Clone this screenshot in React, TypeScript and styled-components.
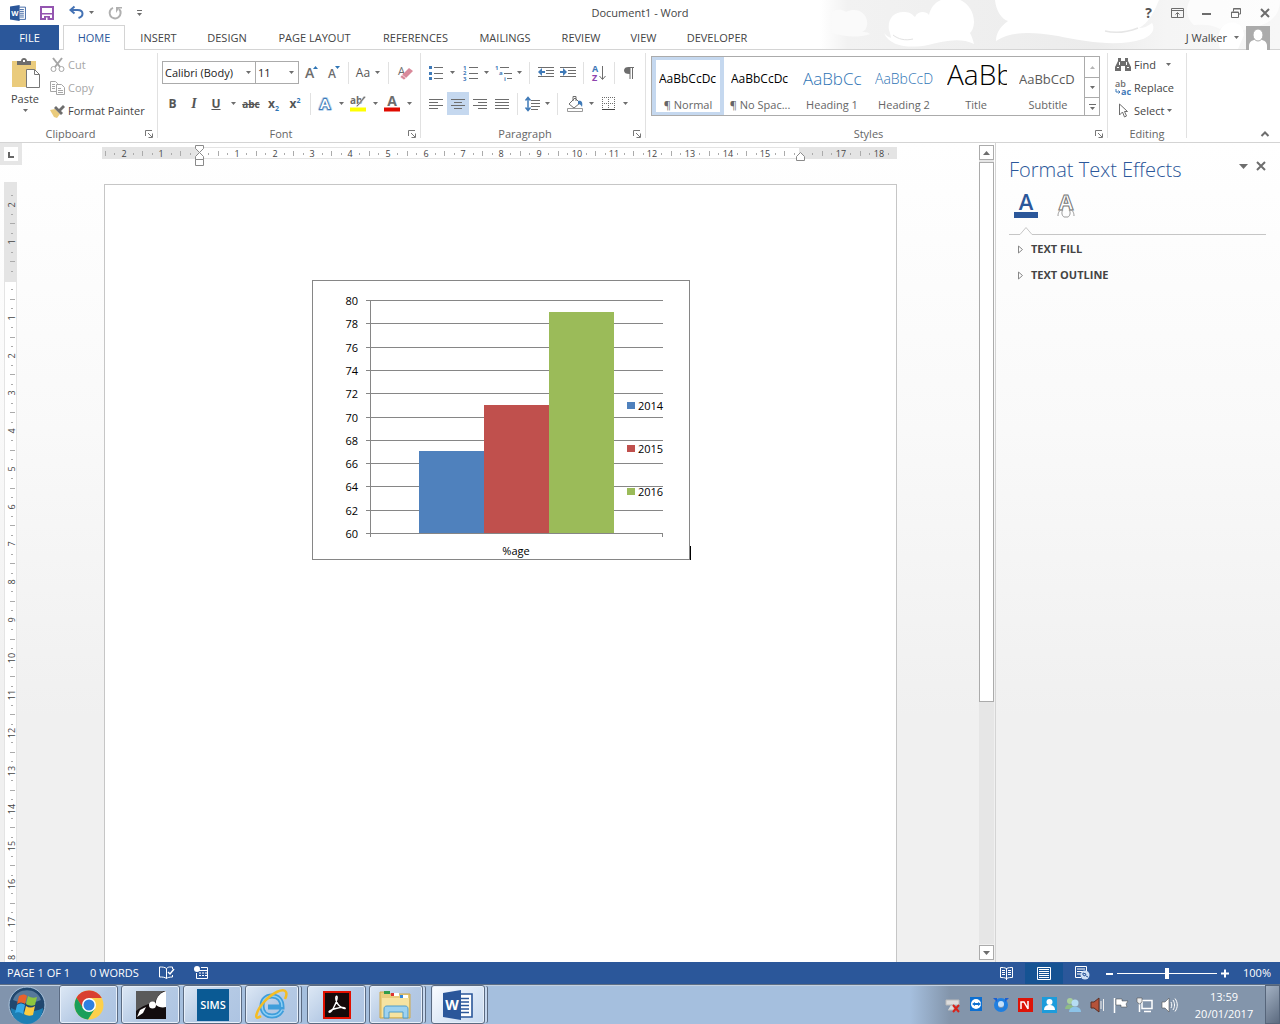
import React from "react";
import styled, { createGlobalStyle, css } from "styled-components";

const BLUE = "#2b579a";
const GREY = "#6d6d6d";
const UI = `"Open Sans", "Noto Sans", sans-serif`;

const Global = createGlobalStyle`
  *, *::before, *::after { box-sizing: border-box; }
  body { margin: 0; overflow: hidden; font: 11px/16px ${UI}; color: #444; background: #fff; }
  button, select, input { font: inherit; color: inherit; margin: 0; }
  svg { display: block; flex: none; overflow: visible; }
`;

const Window = styled.div`
  height: 100vh;
  display: flex;
  flex-direction: column;
`;

/* ---------- header ---------- */
const Header = styled.header`
  position: relative;
  flex: none;
  height: 50px;
  display: flex;
  flex-direction: column;
`;
const Clouds = styled.svg`
  position: absolute;
  right: 0;
  top: 0;
  overflow: hidden;
`;
const TitleBar = styled.div`
  position: relative;
  height: 25px;
  display: grid;
  grid-template-columns: 1fr auto 1fr;
  align-items: center;
`;
const QuickAccess = styled.div`
  display: flex;
  align-items: center;
  padding-left: 8px;
`;
const WindowButtons = styled.div`
  display: flex;
  justify-content: flex-end;
`;
const DocTitle = styled.h1`
  margin: 0;
  font-size: 11px;
  font-weight: 400;
  line-height: 24px;
`;
const Plain = styled.button<{ $w?: number; $h?: number; $on?: boolean }>`
  flex: none;
  display: flex;
  align-items: center;
  justify-content: center;
  width: ${(p) => (p.$w ? `${p.$w}px` : "auto")};
  height: ${(p) => p.$h ?? 23}px;
  padding: 0;
  border: 0;
  background: ${(p) => (p.$on ? "#c5d8ef" : "transparent")};
`;
const TabRow = styled.nav`
  position: relative;
  height: 25px;
  display: flex;
  box-shadow: inset 0 -1px #d4d4d4;
`;
const Tab = styled.button<{ $w: number; $kind?: "file" | "active" }>`
  flex: none;
  width: ${(p) => p.$w}px;
  padding: 0;
  border: 0;
  background: transparent;
  white-space: nowrap;
  line-height: 24px;
  ${(p) =>
    p.$kind === "file" &&
    css`
      background: ${BLUE};
      color: #fff;
      margin-right: 4px;
    `}
  ${(p) =>
    p.$kind === "active" &&
    css`
      background: #fff;
      color: ${BLUE};
      border: 1px solid #d4d4d4;
      border-bottom: 0;
    `}
`;
const Account = styled.div`
  margin-left: auto;
  display: flex;
  align-items: center;
  gap: 7px;
  padding-right: 10px;
`;

/* ---------- ribbon ---------- */
const Ribbon = styled.div`
  flex: none;
  height: 93px;
  display: flex;
  padding-top: 3px;
  background: #fff;
  border-bottom: 1px solid #d4d4d4;
`;
const Group = styled.section<{ $w: number }>`
  flex: none;
  width: ${(p) => p.$w}px;
  height: 85px;
  display: grid;
  grid-template-rows: 73px 12px;
  border-right: 1px solid #e1e1e1;
`;
const GroupLabel = styled.div`
  display: flex;
  line-height: 16px;
  color: #666;
  span { flex: 1; text-align: center; }
`;
const Rows = styled.div`
  display: flex;
  flex-direction: column;
  gap: 8px;
  padding: 8px 0 0 4px;
`;
const Row = styled.div`
  display: flex;
  align-items: center;
  height: 23px;
`;
const Rule = styled.i<{ $w: number }>`
  flex: none;
  width: ${(p) => p.$w}px;
  height: 22px;
  background: linear-gradient(#e1e1e1, #e1e1e1) center / 1px 100% no-repeat;
`;
const Gap = styled.i<{ $w: number }>`
  flex: none;
  width: ${(p) => p.$w}px;
`;
const ClipBody = styled.div`
  display: flex;
`;
const PasteButton = styled.button`
  width: 50px;
  padding: 4px 0 0;
  border: 0;
  background: none;
  display: flex;
  flex-direction: column;
  align-items: center;
  gap: 2px;
`;
const Stack = styled.div<{ $pad?: number }>`
  display: flex;
  flex-direction: column;
  padding-left: ${(p) => p.$pad ?? 0}px;
`;
const Command = styled.button<{ $off?: boolean }>`
  height: 23px;
  padding: 0;
  border: 0;
  background: none;
  display: flex;
  align-items: center;
  gap: 3px;
  color: ${(p) => (p.$off ? "#a6a6a6" : "#444")};
  white-space: nowrap;
`;
const Combo = styled.label<{ $w: number }>`
  flex: none;
  width: ${(p) => p.$w}px;
  height: 23px;
  display: grid;
  align-items: center;
  border: 1px solid #ababab;
  & + & { border-left: 0; }
  select, svg { grid-area: 1 / 1; }
  svg { justify-self: end; margin-right: 4px; pointer-events: none; }
  select {
    appearance: none;
    width: 100%;
    height: 21px;
    padding: 0 0 0 2px;
    border: 0;
    background: none;
    color: #222;
  }
`;
const Letter = styled.span<{ $size?: number }>`
  font-size: ${(p) => p.$size ?? 12}px;
  font-weight: 700;
  color: #555;
  sup, sub { font-size: 7px; line-height: 0; color: #2e75b6; }
`;
const SerifLetter = styled(Letter)`
  font-family: "Liberation Serif", serif;
  font-size: 14px;
`;
const Gallery = styled.div`
  margin: 3px 7px 10px 5px;
  display: flex;
  border: 1px solid #ababab;
`;
const StyleCard = styled.button<{ $on?: boolean }>`
  width: 72px;
  padding: 0 3px;
  border: ${(p) => (p.$on ? "4px solid #c5d8ef" : "4px solid transparent")};
  border-width: 3px 4px;
  background: none;
  display: flex;
  flex-direction: column;
  color: #666;
  white-space: nowrap;
  span { line-height: 15px; align-self: center; }
`;
const Preview = styled.b<{ $size: number; $color: string; $light?: boolean }>`
  width: 60px;
  height: 37px;
  display: block;
  overflow: hidden;
  text-align: left;
  font-size: ${(p) => p.$size}px;
  font-weight: ${(p) => (p.$light ? 300 : 400)};
  line-height: ${(p) => (p.$size > 20 ? 28 : 38)}px;
  color: ${(p) => p.$color};
`;
const Scroller = styled.div`
  width: 15px;
  margin-left: auto;
  display: grid;
  grid-template-rows: repeat(3, 1fr);
  border-left: 1px solid #ababab;
  button + button { border-top: 1px solid #ababab; }
`;
const RibbonEnd = styled.div`
  flex: 1;
  display: flex;
  align-items: flex-end;
  justify-content: flex-end;
  padding: 0 6px 0 0;
`;

/* ---------- workspace ---------- */
const Workspace = styled.main`
  flex: 1;
  min-height: 0;
  display: flex;
  background: linear-gradient(#fff 0, #f9f9f9 35%, #f0f0f0 70%, #f0f0f0);
`;
const LeftEdge = styled.div`
  flex: none;
  width: 22px;
  display: flex;
  flex-direction: column;
  overflow: hidden;
`;
const TabSelector = styled.button`
  flex: none;
  width: 22px;
  height: 22px;
  margin-bottom: 17px;
  border: 4px solid #e6e6e6;
  background: #fff;
  padding: 2px 0 0 4px;
`;
const VerticalRuler = styled.svg`
  margin-left: 4px;
`;
const Canvas = styled.div`
  flex: 1;
  min-width: 0;
  display: flex;
  flex-direction: column;
  align-items: center;
  overflow: hidden;
`;
const HorizontalRuler = styled.svg`
  margin-top: 2px;
`;
const Page = styled.article`
  flex: 1;
  width: 793px;
  margin-top: 15px;
  padding-top: 95px;
  border: 1px solid #c6c6c6;
  border-bottom: 0;
  background: #fff;
`;
const Paragraph = styled.div`
  display: flex;
  justify-content: center;
  align-items: flex-end;
  padding-left: 2px;
`;
const TextCursor = styled.i`
  width: 1px;
  height: 14px;
  background: #000;
`;
const ScrollBar = styled.div`
  flex: none;
  width: 17px;
  display: flex;
  flex-direction: column;
  padding: 2px 1px 2px 0;
  border-right: 1px solid #d4d4d4;
`;
const ScrollArrow = styled.button`
  flex: none;
  height: 15px;
  padding: 0;
  border: 1px solid #ababab;
  background: #fff;
  display: grid;
  place-items: center;
`;
const Track = styled.div`
  flex: 1;
  padding-top: 2px;
  background: #e6e6e6;
  margin-bottom: 1px;
`;
const Thumb = styled.div`
  height: 69%;
  background: #fff;
  border: 1px solid #ababab;
`;
const Pane = styled.aside`
  flex: none;
  width: 284px;
  padding: 13px 14px 0 13px;
`;
const PaneHead = styled.div`
  display: flex;
  height: 28px;
  margin-right: -4px;
  h2 { flex: 1; margin: 0; font-size: 20px; line-height: 28px; font-weight: 300; color: ${BLUE}; white-space: nowrap; }
`;
const PaneTabs = styled.div`
  display: flex;
  gap: 16px;
  padding: 8px 0 5px 5px;
`;
const Sections = styled.div`
  display: flex;
  flex-direction: column;
  padding-top: 1px;
`;
const Section = styled.button`
  height: 26px;
  padding: 0 0 0 9px;
  display: flex;
  align-items: center;
  gap: 7px;
  border: 0;
  background: none;
  font-weight: 700;
`;

/* ---------- status bar ---------- */
const StatusBar = styled.footer`
  flex: none;
  height: 22px;
  display: flex;
  align-items: center;
  padding: 0 9px 0 7px;
  background: ${BLUE};
  color: #fff;
`;
const StatusItems = styled.div`
  flex: 1;
  display: flex;
  align-items: center;
  gap: 20px;
`;
const ZoomRange = styled.input`
  appearance: none;
  width: 100px;
  height: 12px;
  margin: 0 4px;
  background: linear-gradient(#fff, #fff) center / 100% 1px no-repeat;
  &::-webkit-slider-thumb { appearance: none; width: 4px; height: 11px; background: #fff; }
`;
const ZoomValue = styled.output`
  width: 42px;
  text-align: right;
`;

/* ---------- task bar ---------- */
const TaskBar = styled.div`
  flex: none;
  height: 40px;
  display: flex;
  border-top: 1px solid #5e6f85;
  box-shadow: inset 0 1px #c3d1e2;
  background: linear-gradient(90deg, #8194ad 0, #8194ad 58px, #a5bfde 64px, #a5bfde calc(100% - 370px), #8395ab calc(100% - 330px), #8395ab);
`;
const Start = styled.button`
  width: 59px;
  padding: 0 0 0 8px;
  border: 0;
  background: none;
`;
const Apps = styled.div`
  flex: 1;
  display: flex;
  gap: 3px;
`;
const TaskButton = styled.button<{ $stack?: boolean; $on?: boolean; $after?: number }>`
  flex: none;
  width: ${(p) => (p.$stack ? 54 : 59)}px;
  height: 39px;
  margin-right: ${(p) => p.$after ?? 0}px;
  padding: 0;
  display: grid;
  place-items: center;
  border: 1px solid #5b6b82;
  border-radius: 3px;
  background: ${(p) =>
    p.$on
      ? "linear-gradient(135deg, #fafcff, #d8e5f5 60%, #c8daf0)"
      : "linear-gradient(135deg, #dde8f5, #b4c9e4 55%, #adc4e2)"};
  box-shadow: inset 0 0 0 1px #e6effa${(p) => (p.$stack ? ", 3px 0 0 -1px #c5d7ee, 4px 0 0 -1px #5b6b82" : "")};
`;
const Tray = styled.div`
  display: flex;
  align-items: center;
  gap: 6px;
`;
const Clock = styled.time`
  width: 80px;
  margin-right: -3px;
  text-align: center;
  line-height: 17px;
  color: #fff;
`;
const ShowDesktop = styled.button`
  width: 15px;
  margin-left: 4px;
  border: 1px solid #56657a;
  background: linear-gradient(135deg, #a3b1c3, #5c6b80);
`;

/* ---------- small drawings ---------- */
type IcoProps = { w: number; h: number; children: React.ReactNode };
const Ico = ({ w, h, children }: IcoProps) => (
  <svg width={w} height={h} viewBox={`0 0 ${w} ${h}`} fill="none" aria-hidden="true">
    {children}
  </svg>
);
const Down = ({ color = GREY }: { color?: string }) => (
  <Ico w={5} h={3}><path d="M0 0h5L2.5 3z" fill={color} /></Ico>
);
const Up = ({ color = GREY }: { color?: string }) => (
  <Ico w={5} h={3}><path d="M0 3h5L2.5 0z" fill={color} /></Ico>
);
const Launcher = () => (
  <Plain $w={16} $h={16} aria-label="More options">
    <Ico w={8} h={8}>
      <path d="M.5 6V.5H7M3 3l4 4M7.5 3.5v4h-4" stroke="#777" />
    </Ico>
  </Plain>
);
const DropButton = ({ w = 12, label }: { w?: number; label: string }) => (
  <Plain $w={w} aria-label={label}><Down /></Plain>
);
const Lines = ({ rows }: { rows: [number, number][] }) => (
  <Ico w={14} h={12}>
    {rows.map(([x, w], i) => (
      <path key={i} d={`M${x} ${1.5 + i * 3}h${w}`} stroke={GREY} />
    ))}
  </Ico>
);
const WordMark = ({ s }: { s: number }) => (
  <svg width={s} height={s} viewBox="0 0 30 30" aria-hidden="true">
    <path d="M15 4h14v23H15z" fill="#fff" stroke={BLUE} strokeWidth="1.6" />
    <path d="M18 8.500h8M18 12h8M18 15.500h8M18 19h8M18 22.500h8" stroke={BLUE} strokeWidth="1.600" />
    <path d="M0 3l18-3v30L0 27z" fill={BLUE} />
    <text x="9" y="20" textAnchor="middle" fontSize="14" fontWeight="700" fill="#fff">W</text>
  </svg>
);

/* ---------- rulers ---------- */
const CM = 37.75;
const HRuler = () => {
  const zero = 97;
  const marks: React.ReactNode[] = [];
  for (let q = -10; q <= 73; q++) {
    const x = Math.round(zero + (q * CM) / 4);
    if (q % 4 === 0) {
      const n = Math.abs(q / 4);
      if (n !== 0 && n !== 16)
        marks.push(<text key={q} x={x} y={12} textAnchor="middle" fontSize="9" fill="#444">{n}</text>);
    } else {
      const tall = q % 2 === 0;
      marks.push(<path key={q} d={`M${x + 0.5} ${tall ? 6 : 8}v${tall ? 5 : 2}`} stroke="#ababab" />);
    }
  }
  return (
    <HorizontalRuler width="797" height="24" aria-label="Horizontal ruler">
      <path d="M0 2h795v12H0z" fill="#e4e4e4" />
      <path d="M97 3h600v10H97z" fill="#fff" />
      {marks}
      <path d="M93.500 .5h8v3l-4 4-4-4zM93.500 14.500v-3l4-4 4 4v3zM93.500 14.500h8v6h-8z" fill="#fff" stroke="#8a8a8a" />
      <path d="M694.500 15.500v-4l4-4 4 4v4z" fill="#fff" stroke="#8a8a8a" />
    </HorizontalRuler>
  );
};
const VRuler = () => {
  const zero = 98;
  const marks: React.ReactNode[] = [];
  for (let q = -9; q <= 110; q++) {
    const y = Math.round(zero + (q * CM) / 4);
    if (q % 4 === 0) {
      if (q !== 0)
        marks.push(
          <text key={q} transform={`translate(11 ${y}) rotate(-90)`} textAnchor="middle" fontSize="9" fill="#444">
            {Math.abs(q / 4)}
          </text>
        );
    } else {
      const tall = q % 2 === 0;
      marks.push(<path key={q} d={`M${tall ? 6 : 7} ${y + 0.5}h${tall ? 5 : 2}`} stroke="#ababab" />);
    }
  }
  return (
    <VerticalRuler width="13" height="1200" aria-label="Vertical ruler">
      <path d="M0 0h13v1200H0z" fill="#e4e4e4" />
      <path d="M1 100h11v1100H1z" fill="#fff" />
      {marks}
    </VerticalRuler>
  );
};

/* ---------- chart ---------- */
const series = [
  { year: "2014", value: 67, color: "#4f81bd" },
  { year: "2015", value: 71, color: "#c0504d" },
  { year: "2016", value: 79, color: "#9bbb59" },
];
const yOf = (v: number) => Math.round(20 + ((80 - v) * 233) / 20);
const Chart = () => (
  <svg width="378" height="280" role="img" aria-label="Percentage by year" fontSize="11" fill="#000" fontFamily={UI}>
    <rect x=".5" y=".5" width="377" height="279" fill="#fff" stroke="#868686" />
    {Array.from({ length: 11 }, (_, i) => 80 - i * 2).map((v) => (
      <g key={v}>
        <path d={`M54 ${yOf(v) + 0.5}H351`} stroke="#868686" />
        <text x="46" y={yOf(v) + 5} textAnchor="end">{v}</text>
      </g>
    ))}
    {series.map((s, i) => (
      <rect key={s.year} x={107 + i * 65} y={yOf(s.value)} width="65" height={253 - yOf(s.value)} fill={s.color} />
    ))}
    <path d="M58.500 20v237M350.500 253v4" stroke="#868686" />
    {series.map((s, i) => (
      <g key={s.year}>
        <rect x="315" y={122 + i * 43} width="8" height="7" fill={s.color} />
        <text x="326" y={130 + i * 43}>{s.year}</text>
      </g>
    ))}
    <text x="204" y="275" textAnchor="middle">%age</text>
  </svg>
);

const tabs: [string, number][] = [
  ["INSERT", 67], ["DESIGN", 70], ["PAGE LAYOUT", 105], ["REFERENCES", 97],
  ["MAILINGS", 82], ["REVIEW", 70], ["VIEW", 55], ["DEVELOPER", 92],
];
const styles = [
  { name: "¶ Normal", text: "AaBbCcDc", size: 12, color: "#000", on: true },
  { name: "¶ No Spac...", text: "AaBbCcDc", size: 12, color: "#000" },
  { name: "Heading 1", text: "AaBbCc", size: 17, color: "#2e74b5", light: true },
  { name: "Heading 2", text: "AaBbCcD", size: 14, color: "#2e74b5", light: true },
  { name: "Title", text: "AaBb", size: 28, color: "#000", light: true },
  { name: "Subtitle", text: "AaBbCcD", size: 13, color: "#5a5a5a" },
];

const TopBar = () => (
  <Header>
    <Clouds width="460" height="49" viewBox="-20 0 460 49" aria-hidden="true">
      <defs>
        <linearGradient id="sky" x1="0" x2="1" y1="0" y2="0">
          <stop offset="0" stopColor="#fff" />
          <stop offset=".06" stopColor="#f2f2f2" />
          <stop offset=".6" stopColor="#ececec" />
          <stop offset=".75" stopColor="#f5f5f5" />
          <stop offset="1" stopColor="#f7f7f7" />
        </linearGradient>
      </defs>
      <path d="M-20 0h460v49H-20z" fill="url(#sky)" />
      <path d="M-8 12c6-4 12-2 14 0 10-5 20 0 21 9 1 6-2 10-5 11 3 0 6 0 8 2-12 4-25 3-38-1z" fill="#fafafa" />
      <path d="M49 30c-2-12 6-19 16-18 5 0 8 3 10 5 2-5 10-7 14-2C91 5 99-2 111-2c14 0 23 12 23 24 0 5-2 9-4 11 2 4 3 7 4 11-14-7-30-3-46 1-15 3-38 3-44-12 2 2 4 4 7 5 0-2-1-5-2-8z" fill="#fff" />
      <path d="M53 35c5 4 12 6 20 4" stroke="#e2e2e2" fill="none" />
      <path d="M155 0c1 10 6 19 13 21-8 6-12 12-12 20 14-9 32-10 62-5 30 6 60 11 85 3 8-3 13-9 9-16-4 3-8 5-13 5 10-5 16-18 20-28z" fill="#fff" />
      <path d="M265 31c8 2 20 2 33-3" stroke="#e6e6e6" fill="none" strokeWidth="1.500" />
      <path d="M350 0c-6 10-2 20 4 25 10-1 20 0 26 4 8-8 16-2 20 2 20-5 40-8 40-31z" fill="#fff" opacity=".7" />
      <path d="M380 49c-4-14 0-24 9-26s14 4 15 12l-6 14z" fill="#fff" />
    </Clouds>
    <TitleBar>
      <QuickAccess>
        <Plain $w={20} aria-label="Word"><WordMark s={16} /></Plain>
        <Gap $w={8} />
        <Plain $w={22} aria-label="Save">
          <Ico w={14} h={14}>
            <path d="M1 1h12v12H1z" stroke="#9455b0" strokeWidth="2" />
            <path d="M2 7h10v1.500H2zM4 10h6v4H4z" fill="#9455b0" />
            <path d="M6 11.500h1.500V14H6z" fill="#fff" />
          </Ico>
        </Plain>
        <Gap $w={8} />
        <Plain $w={20} aria-label="Undo">
          <Ico w={15} h={13}>
            <path d="M5.500.500L1.500 4l4 3.500M1.500 4h7c3.500 0 5 1.500 5 3.700 0 2-1.500 3.500-4 4.300" stroke="#4472b4" strokeWidth="2" />
          </Ico>
        </Plain>
        <DropButton w={10} label="Undo history" />
        <Gap $w={9} />
        <Plain $w={20} aria-label="Repeat">
          <Ico w={14} h={14}>
            <path d="M5 1.800A5.500 5.500 0 1 0 11 3" stroke="#b0b0b0" strokeWidth="2" />
            <path d="M8 7V1h6v1.500h-3z" fill="#b0b0b0" />
          </Ico>
        </Plain>
        <Gap $w={8} />
        <Plain $w={12} aria-label="Customize quick access">
          <Ico w={5} h={6}><path d="M0 .5h5" stroke={GREY} /><path d="M0 3h5L2.500 6z" fill={GREY} /></Ico>
        </Plain>
      </QuickAccess>
      <DocTitle>Document1 - Word</DocTitle>
      <WindowButtons>
        <Plain $w={29} aria-label="Help"><Letter $size={14}>?</Letter></Plain>
        <Plain $w={29} aria-label="Ribbon options">
          <Ico w={13} h={10}><path d="M.5.500h12v9H.5zM.5 2.500h12M6.500 9V5M4.500 6.500l2-2 2 2" stroke={GREY} /></Ico>
        </Plain>
        <Plain $w={29} aria-label="Minimize"><Ico w={9} h={9}><path d="M0 6h9" stroke={GREY} strokeWidth="2" /></Ico></Plain>
        <Plain $w={29} aria-label="Restore">
          <Ico w={10} h={10}><path d="M.5 4h7v5.500h-7zM.5 4.500h7M2.500 3.500V.500h7V6H8M2.500 1h7" stroke={GREY} /></Ico>
        </Plain>
        <Plain $w={30} aria-label="Close"><Ico w={10} h={10}><path d="M1 1l8 8M9 1L1 9" stroke={GREY} strokeWidth="2" /></Ico></Plain>
      </WindowButtons>
    </TitleBar>
    <TabRow>
      <Tab $w={59} $kind="file">FILE</Tab>
      <Tab $w={62} $kind="active">HOME</Tab>
      {tabs.map(([name, w]) => <Tab key={name} $w={w}>{name}</Tab>)}
      <Account>
        <span>J Walker</span>
        <Down />
        <Ico w={24} h={24}>
          <path d="M0 0h24v24H0z" fill="#ababab" />
          <path d="M3 24v-4c0-4 3-6 6-6h6c3 0 6 2 6 6v4z" fill="#fff" />
          <ellipse cx="12" cy="9" rx="5" ry="6" fill="#fff" stroke="#ababab" />
        </Ico>
      </Account>
    </TabRow>
  </Header>
);

const ClipboardGroup = () => (
  <Group $w={158}>
    <ClipBody>
      <PasteButton>
        <Ico w={28} h={32}>
          <path d="M1 4h24v26H1z" fill="#eacb7c" />
          <path d="M6 8V4h4c0-4 6-4 6 0h4v4z" fill="#6d6d6d" />
          <path d="M12 3h2v2h-2z" fill="#fff" />
          <path d="M15.500 12.500h8l5 5v13h-13z" fill="#fff" stroke="#777" />
          <path d="M23.500 12.500v5h5" stroke="#777" />
        </Ico>
        <span>Paste</span>
        <Down />
      </PasteButton>
      <Stack>
        <Command $off>
          <Ico w={15} h={16}>
            <path d="M3 1l7 9M12 1L5 10" stroke="#a6a6a6" strokeWidth="2" />
            <circle cx="3.500" cy="12" r="2.500" stroke="#a6a6a6" />
            <circle cx="11.500" cy="12" r="2.500" stroke="#a6a6a6" />
          </Ico>
          Cut
        </Command>
        <Command $off>
          <Ico w={15} h={14}>
            <path d="M.5.500h5l2 2v8h-7zM2 3.500h3M2 5.500h3M2 7.500h3" stroke="#a6a6a6" />
            <path d="M6.500 3.500h5l3 3v7h-8z" fill="#fff" stroke="#a6a6a6" />
            <path d="M8 7.500h3M8 9.500h5M8 11.500h5" stroke="#a6a6a6" />
          </Ico>
          Copy
        </Command>
        <Command>
          <Ico w={15} h={14}>
            <path d="M0 6l5-1 5 5-3 4-3-1z" fill="#eacb7c" />
            <path d="M4 4l2-2 3 3 4-4 2 2-4 4 2 2-2 2z" fill="#6d6d6d" />
          </Ico>
          Format Painter
        </Command>
      </Stack>
    </ClipBody>
    <GroupLabel><span>Clipboard</span><Launcher /></GroupLabel>
  </Group>
);

const FontGroup = () => (
  <Group $w={263}>
    <Rows>
      <Row>
        <Combo $w={94}><select aria-label="Font name"><option>Calibri (Body)</option></select><Down /></Combo>
        <Combo $w={43}><select aria-label="Font size"><option>11</option></select><Down /></Combo>
        <Plain $w={24} aria-label="Grow font">
          <Ico w={13} h={16}><text x="0" y="13" fontSize="14" fontWeight="600" fill={GREY}>A</text><path d="M8 4l2.500-3L13 4z" fill="#2e75b6" /></Ico>
        </Plain>
        <Plain $w={20} aria-label="Shrink font">
          <Ico w={11} h={16}><text x="0" y="13" fontSize="12" fontWeight="600" fill={GREY}>A</text><path d="M7 1h5L9.500 4z" fill="#2e75b6" /></Ico>
        </Plain>
        <Rule $w={10} />
        <Plain $w={20} aria-label="Change case">
          <Letter as="span"><CaseText>Aa</CaseText></Letter>
        </Plain>
        <DropButton label="Case options" w={9} />
        <Rule $w={12} />
        <Plain $w={22} aria-label="Clear formatting">
          <Ico w={15} h={16}>
            <text x="0" y="10" fontSize="11" fill={GREY}>A</text>
            <path d="M3 11l8-8 4 3-8 8z" fill="#d9899a" />
            <path d="M2 12l2-2 4 3-2 2z" fill="#d9899a" stroke="#fff" strokeWidth=".6" />
          </Ico>
        </Plain>
      </Row>
      <Row>
        <Plain $w={21} aria-label="Bold"><Letter>B</Letter></Plain>
        <Plain $w={22} aria-label="Italic"><SerifLetter as="em">I</SerifLetter></Plain>
        <Plain $w={22} aria-label="Underline"><Letter as="u">U</Letter></Plain>
        <DropButton label="Underline styles" />
        <Plain $w={24} aria-label="Strikethrough"><Letter as="s" $size={10}>abc</Letter></Plain>
        <Plain $w={21} aria-label="Subscript"><Letter>x<sub>2</sub></Letter></Plain>
        <Plain $w={22} aria-label="Superscript"><Letter>x<sup>2</sup></Letter></Plain>
        <Rule $w={8} />
        <Plain $w={22} aria-label="Text effects">
          <Ico w={16} h={16}>
            <text x="8" y="13" textAnchor="middle" fontSize="15" fontWeight="600" fill="#3f7ab8" stroke="#bcd6ee" strokeWidth="4" strokeLinejoin="round">A</text>
            <text x="8" y="13" textAnchor="middle" fontSize="15" fontWeight="600" fill="#fff" stroke="#3f7ab8" strokeWidth="2" paintOrder="stroke">A</text>
          </Ico>
        </Plain>
        <DropButton label="Text effect styles" w={10} />
        <Plain $w={24} aria-label="Highlight">
          <Ico w={17} h={17}>
            <text x="0" y="9" fontSize="10" fontWeight="700" fill={GREY}>ab</text>
            <path d="M16 2l-7 8-2 2-1-1 2-2 6-8z" fill="#777" stroke="#fff" strokeWidth=".5" />
            <path d="M0 12.500h16v4H0z" fill="#ff0" />
          </Ico>
        </Plain>
        <DropButton label="Highlight colours" w={10} />
        <Plain $w={24} aria-label="Font colour">
          <Ico w={16} h={17}>
            <text x="8" y="11" textAnchor="middle" fontSize="14" fontWeight="700" fill={GREY}>A</text>
            <path d="M0 12.500h16v4H0z" fill="#e00b00" />
          </Ico>
        </Plain>
        <DropButton label="Font colours" w={10} />
      </Row>
    </Rows>
    <GroupLabel><span>Font</span><Launcher /></GroupLabel>
  </Group>
);
const CaseText = styled.span`
  font-weight: 400;
`;

const ParagraphGroup = () => (
  <Group $w={225}>
    <Rows>
      <Row>
        <Plain $w={22} aria-label="Bullets">
          <Ico w={14} h={14}>
            <path d="M5 1.500h9M5 7.500h9M5 12.500h9" stroke={GREY} />
            <path d="M0 0h3v3H0zM0 6h3v3H0zM0 11h3v3H0z" fill="#3f7ab8" />
          </Ico>
        </Plain>
        <DropButton label="Bullet styles" w={11} />
        <Plain $w={24} aria-label="Numbering">
          <Ico w={15} h={16}>
            <path d="M6 2.500h9M6 8.500h9M6 13.500h9" stroke={GREY} />
            <g fontSize="6" fontWeight="700" fill="#3f7ab8"><text x="0" y="5">1</text><text x="0" y="10">2</text><text x="0" y="16">3</text></g>
          </Ico>
        </Plain>
        <DropButton label="Numbering styles" w={9} />
        <Plain $w={24} aria-label="Multilevel list">
          <Ico w={17} h={16}>
            <path d="M5 2.500h9M9 8.500h8M12 13.500h5" stroke={GREY} />
            <g fontSize="6" fontWeight="700" fill="#3f7ab8"><text x="0" y="5">1</text><text x="4" y="10">a</text><text x="9" y="16">i</text></g>
          </Ico>
        </Plain>
        <DropButton label="List styles" w={8} />
        <Rule $w={12} />
        <Plain $w={22} aria-label="Decrease indent">
          <Ico w={16} h={11}>
            <path d="M0 .500h16M8 3.500h8M8 6.500h8M0 9.500h16" stroke={GREY} />
            <path d="M0 5l4-4v3h3v2H4v3z" fill="#3f7ab8" />
          </Ico>
        </Plain>
        <Plain $w={22} aria-label="Increase indent">
          <Ico w={16} h={11}>
            <path d="M0 .500h16M8 3.500h8M8 6.500h8M0 9.500h16" stroke={GREY} />
            <path d="M7 5L3 1v3H0v2h3v3z" fill="#3f7ab8" />
          </Ico>
        </Plain>
        <Rule $w={8} />
        <Plain $w={24} aria-label="Sort">
          <Ico w={14} h={16}>
            <text x="0" y="7" fontSize="9" fontWeight="700" fill="#3f7ab8">A</text>
            <text x="0" y="16" fontSize="9" fontWeight="700" fill="#8e44ad">Z</text>
            <path d="M10.500 1v13M7.500 11l3 3.500 3-3.500" stroke={GREY} />
          </Ico>
        </Plain>
        <Rule $w={6} />
        <Plain $w={24} aria-label="Show paragraph marks">
          <Ico w={10} h={12}><path d="M4.500 0H10v1H9v11H8V1H6.500v11h-1V7C2 7 0 6 0 3.500S2 0 4.500 0z" fill={GREY} /></Ico>
        </Plain>
      </Row>
      <Row>
        <Plain $w={22} aria-label="Align left"><Lines rows={[[0, 14], [0, 9], [0, 14], [0, 9]]} /></Plain>
        <Plain $w={22} $on aria-label="Centre"><Lines rows={[[0, 14], [3, 8], [0, 14], [3, 8]]} /></Plain>
        <Plain $w={22} aria-label="Align right"><Lines rows={[[0, 14], [5, 9], [0, 14], [5, 9]]} /></Plain>
        <Plain $w={22} aria-label="Justify"><Lines rows={[[0, 14], [0, 14], [0, 14], [0, 14]]} /></Plain>
        <Rule $w={8} />
        <Plain $w={22} aria-label="Line spacing">
          <Ico w={15} h={16}>
            <path d="M6 4.500h9M6 7.500h9M6 10.500h9M6 13.500h7" stroke={GREY} />
            <path d="M3 2v12M.5 4.500L3 1.500l2.500 3M.5 11.500l2.500 3 2.500-3" stroke="#3f7ab8" strokeWidth="1.500" />
          </Ico>
        </Plain>
        <DropButton label="Spacing options" w={8} />
        <Rule $w={13} />
        <Plain $w={22} aria-label="Shading">
          <Ico w={17} h={16}>
            <path d="M2 8l6-6 5 5-6 5zM6 5V.5h3V5" stroke={GREY} />
            <path d="M11 5c4-1 5 2 4 6-1-2-2-3-4-3z" fill="#3f7ab8" />
            <path d="M.5 12.500h15v3H.5z" fill="#fff" stroke="#999" />
          </Ico>
        </Plain>
        <DropButton label="Shading colours" w={11} />
        <Plain $w={23} aria-label="Borders">
          <Ico w={13} h={14}><path d="M.5 0v12M6.500 0v12M12.500 0v12M0 .500h13M0 6.500h13" stroke={GREY} strokeDasharray="1 1" /><path d="M0 12.500h13" stroke="#444" /></Ico>
        </Plain>
        <DropButton label="Border styles" w={10} />
      </Row>
    </Rows>
    <GroupLabel><span>Paragraph</span><Launcher /></GroupLabel>
  </Group>
);

const StylesGroup = () => (
  <Group $w={462}>
    <Gallery>
      {styles.map((s) => (
        <StyleCard key={s.name} $on={s.on}>
          <Preview $size={s.size} $color={s.color} $light={s.light}>{s.text}</Preview>
          <span>{s.name}</span>
        </StyleCard>
      ))}
      <Scroller>
        <Plain $h={20} aria-label="Scroll up"><Up color="#b5b5b5" /></Plain>
        <Plain $h={20} aria-label="Scroll down"><Down /></Plain>
        <Plain $h={20} aria-label="More styles"><Ico w={7} h={7}><path d="M0 .500h7" stroke={GREY} /><path d="M1 3h5L3.500 6z" fill={GREY} /></Ico></Plain>
      </Scroller>
    </Gallery>
    <GroupLabel><span>Styles</span><Launcher /></GroupLabel>
  </Group>
);

const EditingGroup = () => (
  <Group $w={79}>
    <Stack $pad={7}>
      <Command>
        <Ico w={16} h={14}>
          <path d="M3 0h3v3h4V0h3v3l3 6v4h-6V8H6v5H0V9l3-6z" fill={GREY} />
          <path d="M2 9.500h2M12 9.500h2M4.500 4v3M11.500 4v3" stroke="#fff" />
        </Ico>
        Find<Gap $w={4} /><Down />
      </Command>
      <Command>
        <Ico w={16} h={16}>
          <text x="0" y="7" fontSize="9" fontWeight="600" fill={GREY}>ab</text>
          <text x="6" y="15" fontSize="9" fontWeight="700" fill="#3f7ab8">ac</text>
          <path d="M1 9v3h4M3.500 10.500L5 12l-1.500 1.500" stroke="#3f7ab8" />
        </Ico>
        Replace
      </Command>
      <Command>
        <Ico w={16} h={15}><path d="M4.500 1v11l3-3 2 5 2-1-2-4.500h3z" fill="#fff" stroke={GREY} /></Ico>
        Select<Down />
      </Command>
    </Stack>
    <GroupLabel><span>Editing</span></GroupLabel>
  </Group>
);

const TaskPane = () => (
  <Pane>
    <PaneHead>
      <h2>Format Text Effects</h2>
      <Plain $w={18} $h={20} aria-label="Pane options"><Ico w={9} h={5}><path d="M0 0h9L4.500 5z" fill={GREY} /></Ico></Plain>
      <Plain $w={18} $h={20} aria-label="Close pane"><Ico w={10} h={10}><path d="M1 1l8 8M9 1L1 9" stroke={GREY} strokeWidth="2" /></Ico></Plain>
    </PaneHead>
    <PaneTabs>
      <Plain $w={24} $h={28} aria-label="Text fill and outline">
        <Ico w={24} h={26}>
          <text x="12" y="17" textAnchor="middle" fontSize="22" fontWeight="600" fill={BLUE}>A</text>
          <path d="M0 19h24v6H0z" fill={BLUE} />
        </Ico>
      </Plain>
      <Plain $w={24} $h={28} aria-label="Text effects">
        <Ico w={20} h={26}>
          <text x="10" y="17" textAnchor="middle" fontSize="21" fontWeight="700" fill="#fff" stroke="#777">A</text>
          <path d="M2 23c0-4 2-6 3-6h2c-2 2-1 6 1 7h4c2-1 3-5 1-7h2c1 0 3 2 3 6" stroke="#999" />
        </Ico>
      </Plain>
    </PaneTabs>
    <PaneRule width="100%" height="10" aria-hidden="true">
      <path d="M0 9.500h11l6-7 6 7h2000" fill="none" stroke="#c6c6c6" />
    </PaneRule>
    <Sections>
      {["TEXT FILL", "TEXT OUTLINE"].map((t) => (
        <Section key={t}>
          <Ico w={6} h={9}><path d="M.5 1l4 3.500-4 3.500z" stroke="#888" /></Ico>
          {t}
        </Section>
      ))}
    </Sections>
  </Pane>
);
const PaneRule = styled.svg`
  overflow: hidden;
`;

const PrintLayout = styled(Plain)`
  background: #155393;
`;

const Status = () => (
  <StatusBar>
    <StatusItems>
      <span>PAGE 1 OF 1</span>
      <span>0 WORDS</span>
      <Ico w={15} h={14}>
        <path d="M7.500 2.500c-2-1.500-4-1.500-7-1.500v10c3 0 5 0 7 1.500 1-1 3-1.500 6-1.500V9M7.500 2.500v10M7.500 2.500c1-1 2-1.500 3-1.500h3v2" stroke="#fff" />
        <path d="M9 6l2 2 4-5" stroke="#fff" strokeWidth="1.500" />
      </Ico>
      <Ico w={14} h={14}>
        <circle cx="3" cy="3" r="3" fill="#fff" />
        <path d="M7 1.500h6.500v11h-11V7M5 4.500h8M5 7h2M8 7h2M11 7h2M5 9.500h2M8 9.500h2M11 9.500h2" stroke="#fff" />
      </Ico>
    </StatusItems>
    <Plain $w={38} $h={22} aria-label="Read mode">
      <Ico w={13} h={13}>
        <path d="M6.500 1.500c-2-1-4-1-6-1v10c2 0 4 0 6 1 2-1 4-1 6-1v-10c-2 0-4 0-6 1zM6.500 1v12M2 3.500h3M2 5.500h3M2 7.500h3M8 3.500h3M8 5.500h3M8 7.500h3" stroke="#fff" />
      </Ico>
    </Plain>
    <PrintLayout $w={38} $h={21} aria-label="Print layout">
      <Ico w={14} h={13}><path d="M.5.500h13v12H.5zM2 2.500h10M2 4.500h10M2 6.500h10M2 8.500h10M2 10.500h10" stroke="#fff" /></Ico>
    </PrintLayout>
    <Plain $w={38} $h={22} aria-label="Web layout">
      <Ico w={15} h={14}>
        <path d="M11.500 5V.500H.5v11H6M2 3h8M2 5.500h6M2 8h4" stroke="#fff" />
        <circle cx="10" cy="9" r="4.500" fill="#cfe0f5" />
        <path d="M8 7l3 1-1 2-2-1zM11 10l2 1" stroke={BLUE} />
      </Ico>
    </Plain>
    <Gap $w={4} />
    <Plain $w={8} $h={22} aria-label="Zoom out"><Ico w={7} h={9}><path d="M0 5h7" stroke="#fff" strokeWidth="2" /></Ico></Plain>
    <ZoomRange type="range" aria-label="Zoom" min={10} max={190} defaultValue={100} />
    <Plain $w={8} $h={22} aria-label="Zoom in"><Ico w={8} h={9}><path d="M0 4.500h8M4 .5v8" stroke="#fff" strokeWidth="2" /></Ico></Plain>
    <ZoomValue>100%</ZoomValue>
  </StatusBar>
);

const Tasks = () => (
  <TaskBar>
    <Start aria-label="Start">
      <Ico w={38} h={38}>
        <circle cx="19" cy="19" r="18" fill="#21476e" stroke="#aac3dc" />
        <path d="M3 22a16 16 0 0 0 32 0c-10 5-22 5-32 0z" fill="#1d7fb4" />
        <path d="M5 14c4-13 24-13 28 0-9 4-19 4-28 0z" fill="#6f8fae" opacity=".7" />
        <path d="M11 10c3-2 6-2 8 0l-2 8c-3-2-5-2-8 0z" fill="#e8622c" />
        <path d="M20 10c3 2 6 2 9 1l-2 8c-3 1-6 1-9-1z" fill="#8ec53f" />
        <path d="M9 19c3-2 5-2 8 0l-2 9c-3-2-6-2-8-1z" fill="#36a9e8" />
        <path d="M18 20c3 2 6 2 9 0l-2 9c-3 1-6 1-9-1z" fill="#fccb3f" />
      </Ico>
    </Start>
    <Apps>
      <TaskButton aria-label="Chrome">
        <Ico w={30} h={30}>
          <circle cx="15" cy="15" r="14.500" fill="#fdd04b" />
          <path d="M2.500 7.700A14.500 14.500 0 0 1 27.700 8H15l-6.500 10z" fill="#d93f30" />
          <path d="M2.500 7.700A14.500 14.500 0 0 0 14 29.500L21 18.500 9 18z" fill="#1a9f5a" />
          <circle cx="15" cy="15" r="7" fill="#fff" />
          <circle cx="15" cy="15" r="5.500" fill="#2f80e0" />
        </Ico>
      </TaskButton>
      <TaskButton aria-label="Media application">
        <Ico w={30} h={28}>
          <path d="M0 0h30v28H0z" fill="#120c0e" />
          <path d="M0 0h28c-6 3-8 8-9 12-6 0-13 3-19 8z" fill="#5a5a5a" />
          <path d="M30 0v16c-4 1-8 0-10-2-1-6 3-12 10-14z" fill="#fff" />
          <circle cx="16.500" cy="14" r="3.500" fill="#fff" />
          <path d="M1 26l3-7 6-3-3 6z" fill="#fff" />
        </Ico>
      </TaskButton>
      <TaskButton aria-label="SIMS">
        <Ico w={32} h={32}>
          <path d="M0 0h32v32H0z" fill="#0a5a94" />
          <text x="16" y="20" textAnchor="middle" fontSize="11" fontWeight="600" fill="#fff">SIMS</text>
        </Ico>
      </TaskButton>
      <TaskButton $stack $after={5} aria-label="Internet Explorer">
        <Ico w={32} h={32}>
          <path d="M26 21c-2 4-6 6-10 6-6 0-10-4-10-10S10 7 16 7s10 4 10 11H12" stroke="#3f9edb" strokeWidth="5" />
          <path d="M26 21c-2 4-6 6-10 6-6 0-10-4-10-10S10 7 16 7s10 4 10 11" stroke="#8fd0f5" strokeWidth="1.500" />
          <path d="M5 27C-3 33 0 22 8 13S28-2 30 3c1 2 0 5-1 7" stroke="#f4bd24" strokeWidth="2.500" />
        </Ico>
      </TaskButton>
      <TaskButton aria-label="Acrobat">
        <Ico w={28} h={28}>
          <path d="M1 1h26v26H1z" fill="#140a0a" stroke="#e01000" strokeWidth="2" />
          <path d="M6 21c-1-2 14-6 16-4s-7 0-9-8c-1-5 2-5 1-1-1 5-6 15-8 13z" stroke="#fff" strokeWidth="1.300" />
        </Ico>
      </TaskButton>
      <TaskButton $stack $after={5} aria-label="Explorer">
        <Ico w={34} h={32}>
          <path d="M1 3h8l2 2h20v24H1z" fill="#e8cd7e" stroke="#cfa94d" />
          <path d="M5 2h6v3H5z" fill="#2f9b4a" /><path d="M13 4h7v3h-7z" fill="#fff" /><path d="M12 4h3v3h-3z" fill="#d33" />
          <path d="M21 6h8v3h-8z" fill="#fff" /><path d="M21 6h3v3h-3z" fill="#38d" />
          <path d="M3 9h27v19H3z" fill="#f6e3a1" />
          <path d="M5 29V20c0-2 1-3 3-3h18c2 0 3 1 3 3v9h-5v-6H10v6z" fill="#9dd2f0" stroke="#4f9cca" />
        </Ico>
      </TaskButton>
      <TaskButton $stack $on aria-label="Word"><WordMark s={30} /></TaskButton>
    </Apps>
    <Tray>
      <Ico w={18} h={18}>
        <path d="M2 4h13v5H2zM7 9h3v5H4" fill="#ddd" stroke="#bbb" />
        <path d="M9 9l6 7M15 9l-6 7" stroke="#d9231a" strokeWidth="2" />
      </Ico>
      <Ico w={18} h={18}>
        <path d="M2 1h12v14H2z" fill="#0c6fd1" /><circle cx="8" cy="8" r="5" fill="#fff" />
        <path d="M4 8l3-2v1h3V6l3 2-3 2V9H7v1z" fill="#0c6fd1" />
      </Ico>
      <Ico w={18} h={18}>
        <circle cx="9" cy="9" r="5" stroke="#1f7fe0" strokeWidth="4" /><circle cx="9" cy="8" r="3" fill="#c4e1fb" />
        <path d="M1 2h4v4zM17 2h-4v4z" fill="#1c5fd0" />
      </Ico>
      <Ico w={18} h={18}>
        <path d="M2 2h15v14H2z" fill="#dd1408" />
        <path d="M5 13V6h3l4 7M12 5v8" stroke="#fff" strokeWidth="1.500" />
      </Ico>
      <Ico w={18} h={18}>
        <path d="M2 1h15v16H2z" fill="#1d9cdb" /><circle cx="9.500" cy="6" r="3" fill="#fff" />
        <path d="M4 14c0-4 3-5 5.500-5s5.500 1 5.500 5z" fill="#fff" />
      </Ico>
      <Ico w={18} h={18}>
        <circle cx="6" cy="5" r="3" fill="#a9cf9c" /><path d="M1 13c0-6 9-6 9 0z" fill="#8fbc86" />
        <circle cx="11" cy="7" r="3.500" fill="#b5dcf3" /><path d="M5 16c0-7 12-7 12 0z" fill="#8cc3e8" />
      </Ico>
      <Ico w={18} h={18}>
        <path d="M3 6h3l5-4v14l-5-4H3z" fill="#b5533a" stroke="#5d2e22" /><path d="M13 5v8M15.500 3v12" stroke="#eee" />
      </Ico>
      <Ico w={18} h={18}>
        <path d="M2.500 2v15" stroke="#fff" strokeWidth="1.500" /><path d="M4 3h6v2h6l-2 3 1 3H9V9H4z" fill="#fff" stroke="#444" strokeWidth=".5" />
      </Ico>
      <Ico w={18} h={18}>
        <path d="M6 4.500h10v8H6zM8 15.500h7M3.500 8v8" stroke="#fff" strokeWidth="1.500" /><path d="M1 2h5v4l-2.500 2L1 6z" fill="#eee" stroke="#555" strokeWidth=".6" />
      </Ico>
      <Ico w={18} h={18}>
        <path d="M2 6h3l4-4v14l-4-4H2z" fill="#fff" stroke="#555" strokeWidth=".6" />
        <path d="M11 6c1 2 1 4 0 6M13 4c2 3 2 7 0 10M15 2.500c3 4 3 9 0 13" stroke="#fff" />
      </Ico>
      <Clock>13:59<br />20/01/2017</Clock>
    </Tray>
    <ShowDesktop aria-label="Show desktop" />
  </TaskBar>
);

export default function App() {
  return (
    <Window>
      <Global />
      <TopBar />
      <Ribbon>
        <ClipboardGroup />
        <FontGroup />
        <ParagraphGroup />
        <StylesGroup />
        <EditingGroup />
        <RibbonEnd>
          <Plain $w={18} $h={16} aria-label="Collapse the ribbon"><Ico w={8} h={6}><path d="M.5 5L4 1.500 7.500 5" stroke={GREY} strokeWidth="2" /></Ico></Plain>
        </RibbonEnd>
      </Ribbon>
      <Workspace>
        <LeftEdge>
          <TabSelector aria-label="Tab stop type"><Ico w={6} h={6}><path d="M1 0v5h5" stroke="#666" strokeWidth="2" /></Ico></TabSelector>
          <VRuler />
        </LeftEdge>
        <Canvas>
          <HRuler />
          <Page>
            <Paragraph><Chart /><TextCursor /></Paragraph>
          </Page>
        </Canvas>
        <ScrollBar>
          <ScrollArrow aria-label="Scroll up"><Ico w={7} h={4}><path d="M0 4h7L3.500 0z" fill={GREY} /></Ico></ScrollArrow>
          <Track><Thumb /></Track>
          <ScrollArrow aria-label="Scroll down"><Ico w={7} h={4}><path d="M0 0h7L3.500 4z" fill={GREY} /></Ico></ScrollArrow>
        </ScrollBar>
        <TaskPane />
      </Workspace>
      <Status />
      <Tasks />
    </Window>
  );
}
